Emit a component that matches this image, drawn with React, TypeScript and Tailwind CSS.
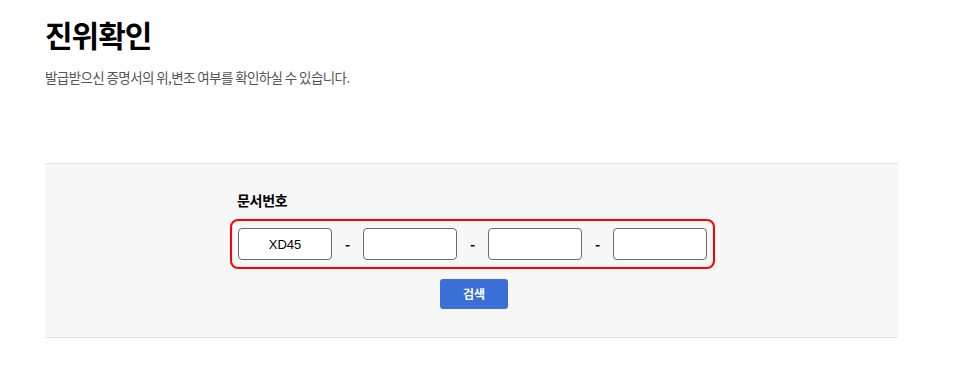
export default function App() {
  const font = { fontFamily: '"Noto Sans CJK KR", "Noto Sans", sans-serif' };
  const parts = ["XD45", "", "", ""];

  return (
    <div className="w-[960px] h-[367px] bg-white text-black" style={font}>
      <div className="pl-[45px] pt-[14px]">
        <h1 className="text-[30px] font-bold leading-[40px] tracking-[-1px]">진위확인</h1>
        <p className="mt-[13px] text-[13.5px] leading-[20px] text-[#555] tracking-[-0.6px]">
          발급받으신 증명서의 위,변조 여부를 확인하실 수 있습니다.
        </p>
      </div>

      <div className="ml-[45px] mt-[76px] w-[853px] h-[175px] bg-[#f7f7f7] border-y border-[#e6e6e6] flex flex-col items-center">
        <div className="mt-[26px] ml-[2px] flex flex-col">
          <label className="pl-[7px] text-[14px] font-bold leading-[20px] tracking-[-0.3px]">문서번호</label>
          <div className="mt-[9px] flex items-center gap-[11px] border-2 border-[#ff0000] rounded-[8px] px-[6px] py-[7px]">
            {parts.map((v, i) => (
              <div key={i} className="flex items-center gap-[11px]">
                {i > 0 && <span className="w-[9px] text-center text-[14px] font-bold">-</span>}
                <input
                  defaultValue={v}
                  className="w-[94px] h-[32px] bg-white border border-[#6b6b6b] rounded-[4px] text-center text-[13px] outline-none"
                  style={{ fontFamily: '"Liberation Sans", sans-serif' }}
                />
              </div>
            ))}
          </div>
        </div>
        <button className="mt-[10px] ml-[5px] w-[68px] h-[30px] bg-[#3a6fd8] rounded-[3px] text-white text-[12px] font-bold">
          검색
        </button>
      </div>
    </div>
  );
}
